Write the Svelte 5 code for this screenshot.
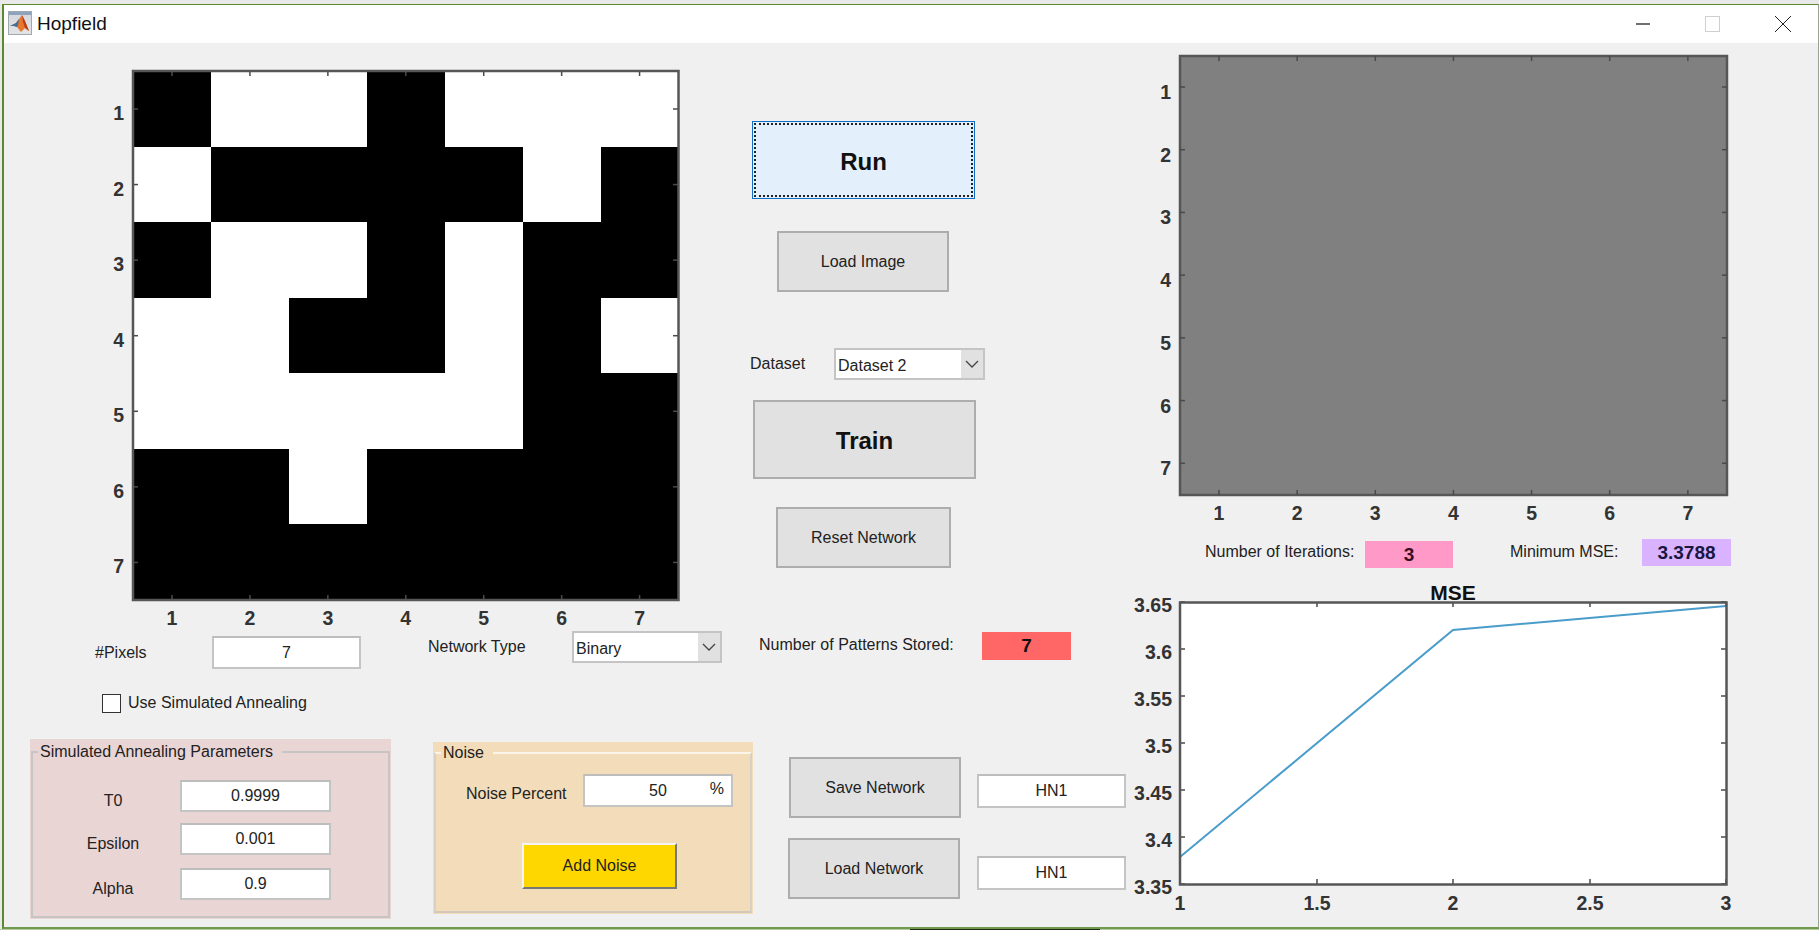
<script>
  const pattern = [
    [1,0,0,1,0,0,0],
    [0,1,1,1,1,0,1],
    [1,0,0,1,0,1,1],
    [0,0,1,1,0,1,0],
    [0,0,0,0,0,1,1],
    [1,1,0,1,1,1,1],
    [1,1,1,1,1,1,1]
  ];
  const n = [1,2,3,4,5,6,7];
  const cw = (678.5-133)/7, ch = (600-71)/7;
  const gw = (1727-1180)/7, gh = (495-56)/7;
  const py = [['3.65',602],['3.6',649],['3.55',696],['3.5',743],['3.45',790],['3.4',837],['3.35',884]];
  const px = [['1',1180],['1.5',1317],['2',1453],['2.5',1590],['3',1726]];
</script>

<div class="desktop">
  <div class="window">
    <header class="titlebar">
      <svg class="logo" viewBox="0 0 24 24" width="24" height="24">
        <defs>
          <linearGradient id="tile" x1="0" y1="0" x2="0" y2="1">
            <stop offset="0" stop-color="#d3d8df"/><stop offset="1" stop-color="#e2e3e5"/>
          </linearGradient>
        </defs>
        <rect x="0.5" y="0.5" width="23" height="23" fill="url(#tile)" stroke="#a3a8ae"/>
        <rect x="1" y="1" width="22" height="3" fill="#8ea4be"/>
        <path d="M2 15 L8 12 L11 8 L14 4 L17 10 L21 20 L17 17 L13 21 L9 16 L6 15 Z" fill="#e8762b"/>
        <path d="M2 15 L8 12 L11 8 L10 14 L9 16 L6 15 Z" fill="#3f6f9e"/>
        <path d="M14 4 L17 10 L21 20 L17 17 L15 11 Z" fill="#b8401c"/>
      </svg>
      <span class="title">Hopfield</span>
      <div class="winctl">
        <svg width="155" height="16" viewBox="0 0 155 16">
          <line x1="0" y1="8" x2="14" y2="8" stroke="#111" stroke-width="1.2"/>
          <rect x="69.5" y="0.5" width="14" height="15" fill="none" stroke="#cfcfcf"/>
          <path d="M139 0 L155 16 M155 0 L139 16" stroke="#222" stroke-width="1" fill="none"/>
        </svg>
      </div>
    </header>

    <main class="body">
      <section class="left">
        <div class="row-a">
          <svg class="axes-image" viewBox="100 60 640 568" width="640" height="568">
            <g shape-rendering="crispEdges">
              {#each pattern as row, r}
                {#each row as v, c}
                  <rect x={133 + c*cw} y={71 + r*ch} width={cw+0.5} height={ch+0.5} fill={v ? '#000' : '#fff'}/>
                {/each}
              {/each}
            </g>
            {#each n as t, i}
              <line x1={172+i*cw} x2={172+i*cw} y1="71" y2="76" class="tick"/>
              <line x1={172+i*cw} x2={172+i*cw} y1="600" y2="595" class="tick"/>
              <line x1="133" x2="138" y1={109+i*ch} y2={109+i*ch} class="tick"/>
              <line x1="678" x2="673" y1={109+i*ch} y2={109+i*ch} class="tick"/>
              <text x={172+i*cw} y="625" class="tl mid">{t}</text>
              <text x="124" y={120+i*ch} class="tl end">{t}</text>
            {/each}
            <rect x="133" y="71" width="545.5" height="529" fill="none" class="box"/>
          </svg>

          <div class="actions">
            <button class="btn big run"><span class="focus">Run</span></button>
            <button class="btn load-image">Load Image</button>
            <div class="dataset">
              <span class="lbl ds-lbl">Dataset</span>
              <div class="popup ds-popup">
                <span class="pop-text">Dataset 2</span>
                <span class="arrow"><svg width="14" height="8" viewBox="0 0 14 8"><path d="M1 1 L7 7 L13 1" fill="none" stroke="#444" stroke-width="1.3"/></svg></span>
              </div>
            </div>
            <button class="btn big train">Train</button>
            <button class="btn reset">Reset Network</button>
          </div>
        </div>

        <div class="row-b">
          <span class="lbl c-pix">#Pixels</span>
          <div class="field f-pix">7</div>
          <span class="lbl c-net">Network Type</span>
          <div class="popup nt-popup">
            <span class="pop-text">Binary</span>
            <span class="arrow"><svg width="14" height="8" viewBox="0 0 14 8"><path d="M1 1 L7 7 L13 1" fill="none" stroke="#444" stroke-width="1.3"/></svg></span>
          </div>
          <span class="lbl c-pat">Number of Patterns Stored:</span>
          <div class="stat red">7</div>
          <label class="check"><span class="box-check"></span><span class="lbl">Use Simulated Annealing</span></label>
        </div>

        <div class="row-c">
          <div class="panel sa">
            <fieldset>
              <legend>Simulated Annealing Parameters</legend>
              <div class="param p1"><span class="lbl">T0</span><div class="field">0.9999</div></div>
              <div class="param p2"><span class="lbl">Epsilon</span><div class="field">0.001</div></div>
              <div class="param p3"><span class="lbl">Alpha</span><div class="field">0.9</div></div>
            </fieldset>
          </div>
          <div class="panel noise">
            <fieldset>
              <legend>Noise</legend>
              <div class="noise-row">
                <span class="lbl">Noise Percent</span>
                <div class="field pct"><span class="v50">50</span><span class="sym">%</span></div>
              </div>
              <button class="add">Add Noise</button>
            </fieldset>
          </div>
          <div class="net">
            <div class="net-row save"><button class="btn">Save Network</button><div class="field">HN1</div></div>
            <div class="net-row loadn"><button class="btn">Load Network</button><div class="field">HN1</div></div>
          </div>
        </div>
      </section>

      <section class="right">
        <svg class="axes-gray" viewBox="1130 50 680 475" width="680" height="475">
          <rect x="1180" y="56" width="547" height="439" fill="#808080" class="box"/>
          {#each n as t, i}
            <line x1={1219+i*gw} x2={1219+i*gw} y1="56" y2="61" class="tick"/>
            <line x1={1219+i*gw} x2={1219+i*gw} y1="495" y2="490" class="tick"/>
            <line x1="1180" x2="1185" y1={87+i*gh} y2={87+i*gh} class="tick"/>
            <line x1="1727" x2="1722" y1={87+i*gh} y2={87+i*gh} class="tick"/>
            <text x={1219+i*gw} y="520" class="tl mid">{t}</text>
            <text x="1171" y={99+i*gh} class="tl end">{t}</text>
          {/each}
        </svg>

        <div class="stats">
          <span class="lbl it-lbl">Number of Iterations:</span>
          <div class="stat pink">3</div>
          <span class="lbl ms-lbl">Minimum MSE:</span>
          <div class="stat purple">3.3788</div>
        </div>

        <svg class="plot" viewBox="1130 580 680 335" width="680" height="335">
          <rect x="1180" y="602.5" width="546.5" height="282" fill="#fff"/>
          {#each py as [t, y]}
            <line x1="1180" x2="1185" y1={y} y2={y} class="tick"/>
            <line x1="1726" x2="1721" y1={y} y2={y} class="tick"/>
            <text x="1172" y={y+10} class="tl end">{t}</text>
          {/each}
          {#each px as [t, x]}
            <line x1={x} x2={x} y1="602" y2="607" class="tick"/>
            <line x1={x} x2={x} y1="884" y2="879" class="tick"/>
            <text x={x} y="910" class="tl mid">{t}</text>
          {/each}
          <polyline points="1180,857 1453,630 1726,606" fill="none" stroke="#4a9ccb" stroke-width="2"/>
          <rect x="1180" y="602.5" width="546.5" height="282" fill="none" class="box"/>
          <text x="1453" y="600" class="ptitle">MSE</text>
        </svg>
      </section>
    </main>
    </div>
  <div class="strip"><span class="strip-dark"></span></div>
</div>

<style>
  :global(body) { margin: 0; background: #ececec; }
  .desktop {
    width: 1819px; height: 930px; box-sizing: border-box; padding: 4px 0 0 2px;
    background: #e9e9e9; overflow: hidden; display: flex; flex-direction: column;
    font-family: "Liberation Sans", Arial, sans-serif; color: #222;
  }
  .window {
    height: 925px; flex: none; box-sizing: border-box; background: #f0f0f0;
    border: 1px solid #5d8a2e; border-left-width: 2px; border-right-color: #97a590; border-bottom: 2px solid #6f9a4e;
    display: flex; flex-direction: column;
  }
  .strip { height: 1px; margin-left: -2px; background: #b6c9a0; display: flex; }
  .strip-dark { margin-left: 910px; width: 190px; background: #1d2a14; }
  .titlebar {
    height: 38px; flex: none; background: #fff; display: flex; align-items: center;
    padding-left: 4px; font-size: 19px; color: #111;
  }
  .logo { margin: -2px 5px 0 0; }
  .title { line-height: 38px; }
  .winctl { margin-left: auto; margin-right: 27px; height: 16px; }
  .winctl svg { display: block; }

  .body { display: grid; grid-template-columns: 1126px 1fr; flex: 1; min-height: 0; }
  .left { display: flex; flex-direction: column; }

  .row-a { height: 585px; display: flex; align-items: flex-start; }
  .axes-image { margin: 17px 0 0 96px; flex: none; display: block; }
  svg { overflow: visible; }
  .box { stroke: #565656; stroke-width: 2.5; }
  .tick { stroke: #4a4a4a; stroke-width: 1.5; }
  .tl { font: bold 19.5px "Liberation Sans", Arial, sans-serif; fill: #333; }
  .mid { text-anchor: middle; }
  .end { text-anchor: end; }
  .ptitle { font: bold 21px "Liberation Sans", Arial, sans-serif; fill: #111; text-anchor: middle; }

  .actions { margin: 78px 0 0 10px; display: flex; flex-direction: column; align-items: flex-start; width: 240px; }
  .btn {
    box-sizing: border-box; margin: 0; padding: 0; background: #e1e1e1; border: 2px solid #adadad;
    font: 16px "Liberation Sans", Arial, sans-serif; color: #222; display: flex; align-items: center; justify-content: center;
  }
  .big { font-size: 24px; font-weight: bold; color: #111; }
  .run { margin-left: 2px; width: 223px; height: 78px; background: #e3f0fb; border: 1px solid #0f6fc6; padding: 1px; }
  .focus { width: 100%; height: 100%; padding-top: 3px; border: 2px dotted #222; box-sizing: border-box; display: flex; align-items: center; justify-content: center; }
  .load-image { margin: 32px 0 0 27px; width: 172px; height: 61px; }
  .dataset { margin-top: 56px; display: flex; align-items: center; }
  .ds-lbl { width: 84px; }
  .ds-popup { width: 151px; height: 32px; }
  .train { margin: 20px 0 0 3px; width: 223px; height: 79px; padding-top: 2px; }
  .reset { margin: 28px 0 0 26px; width: 175px; height: 61px; }

  .lbl { font-size: 16px; line-height: 20px; color: #222; white-space: nowrap; }
  .field {
    box-sizing: border-box; background: #fff; border: 2px solid #c4c4c4; border-top-color: #bdbdbd;
    font-size: 16px; color: #222; display: flex; align-items: center; justify-content: center;
  }
  .popup {
    box-sizing: border-box; display: flex; background: #fff; border: 2px solid #c4c4c4; font-size: 16px; color: #222;
  }
  .pop-text { flex: 1; line-height: 28px; padding: 2px 0 0 2px; }
  .arrow { width: 22px; background: #e1e1e1; display: flex; align-items: center; justify-content: center; }

  .row-b {
    height: 111px; box-sizing: border-box; padding: 3px 0 0 91px; display: grid; align-content: start; align-items: start;
    grid-template-columns: 117px 216px 144px 187px 223px 89px;
  }
  .c-pix { margin-top: 12px; }
  .f-pix { margin-top: 5px; width: 149px; height: 33px; }
  .c-net { margin-top: 6px; }
  .nt-popup { width: 150px; height: 32px; }
  .c-pat { margin-top: 4px; }
  .stat { font-weight: bold; font-size: 19px; color: #111; display: flex; align-items: center; justify-content: center; }
  .red { background: #ff6666; width: 89px; height: 28px; margin-top: 1px; }
  .check { grid-column: 1 / -1; margin: 24px 0 0 7px; display: flex; align-items: center; gap: 7px; }
  .box-check { width: 19px; height: 19px; box-sizing: border-box; background: #fff; border: 1.5px solid #333; }

  .row-c { display: flex; align-items: flex-start; padding-left: 26px; }
  .panel { flex: none; box-sizing: border-box; }
  fieldset {
    margin: 0; min-width: 0; box-sizing: border-box; height: 100%;
    border: 2px solid #c9c4c4; padding: 0;
  }
  legend { font-size: 16px; line-height: 20px; padding: 0 9px 0 2px; margin-left: 5px; color: #222; white-space: nowrap; }
  .sa { width: 361px; height: 180px; background: #ead5d5; padding: 3px 1px 1px 1px; }
  .param { display: flex; align-items: center; }
  .param .lbl { width: 147px; text-align: center; padding: 9px 0 0 13px; box-sizing: border-box; }
  .param .field { width: 151px; height: 32px; }
  .p1 { margin-top: 18px; }
  .p2 { margin-top: 11px; }
  .p3 { margin-top: 13px; }

  .noise { margin-left: 42px; margin-top: 3px; width: 320px; height: 172px; background: #f2dcb9; padding: 1px; }
  .noise fieldset { border-color: #faf4e9 #d8d0c4 #d2c9bb #d8d0c4; }
  .noise-row { display: flex; align-items: center; margin-top: 11px; padding-left: 30px; }
  .noise-row .lbl { width: 117px; padding-top: 6px; }
  .pct { width: 150px; height: 33px; justify-content: flex-start; }
  .v50 { margin-left: 64px; }
  .sym { margin-left: 43px; margin-top: -4px; }
  .add {
    display: block; margin: 36px 0 0 86px; width: 155px; height: 46px; box-sizing: border-box; padding: 0;
    background: #ffd700; color: #222; font: 16px "Liberation Sans", Arial, sans-serif;
    border: 2px solid; border-color: #f4f4f4 #777 #777 #f4f4f4;
  }

  .net { margin-left: 35px; margin-top: 18px; }
  .net-row { display: flex; align-items: flex-start; }
  .net-row .btn { width: 172px; height: 61px; }
  .net-row .field { width: 149px; height: 34px; }
  .save .btn { margin-left: 1px; }
  .save .field { margin: 17px 0 0 16px; }
  .loadn { margin-top: 20px; }
  .loadn .field { margin: 18px 0 0 17px; }

  .right { display: flex; flex-direction: column; min-width: 0; }
  .axes-gray { margin-top: 7px; display: block; flex: none; }
  .stats { margin-top: 14px; height: 29px; padding-left: 75px; display: flex; align-items: flex-start; }
  .it-lbl { margin-top: 3px; width: 160px; }
  .ms-lbl { margin: 3px 0 0 57px; width: 132px; }
  .pink { background: #ff99c8; width: 88px; height: 27px; margin-top: 2px; color: #3a0d22; }
  .purple { background: #d9b3ff; width: 89px; height: 27px; color: #1a1640; }
  .plot { margin-top: 12px; display: block; flex: none; }
</style>
